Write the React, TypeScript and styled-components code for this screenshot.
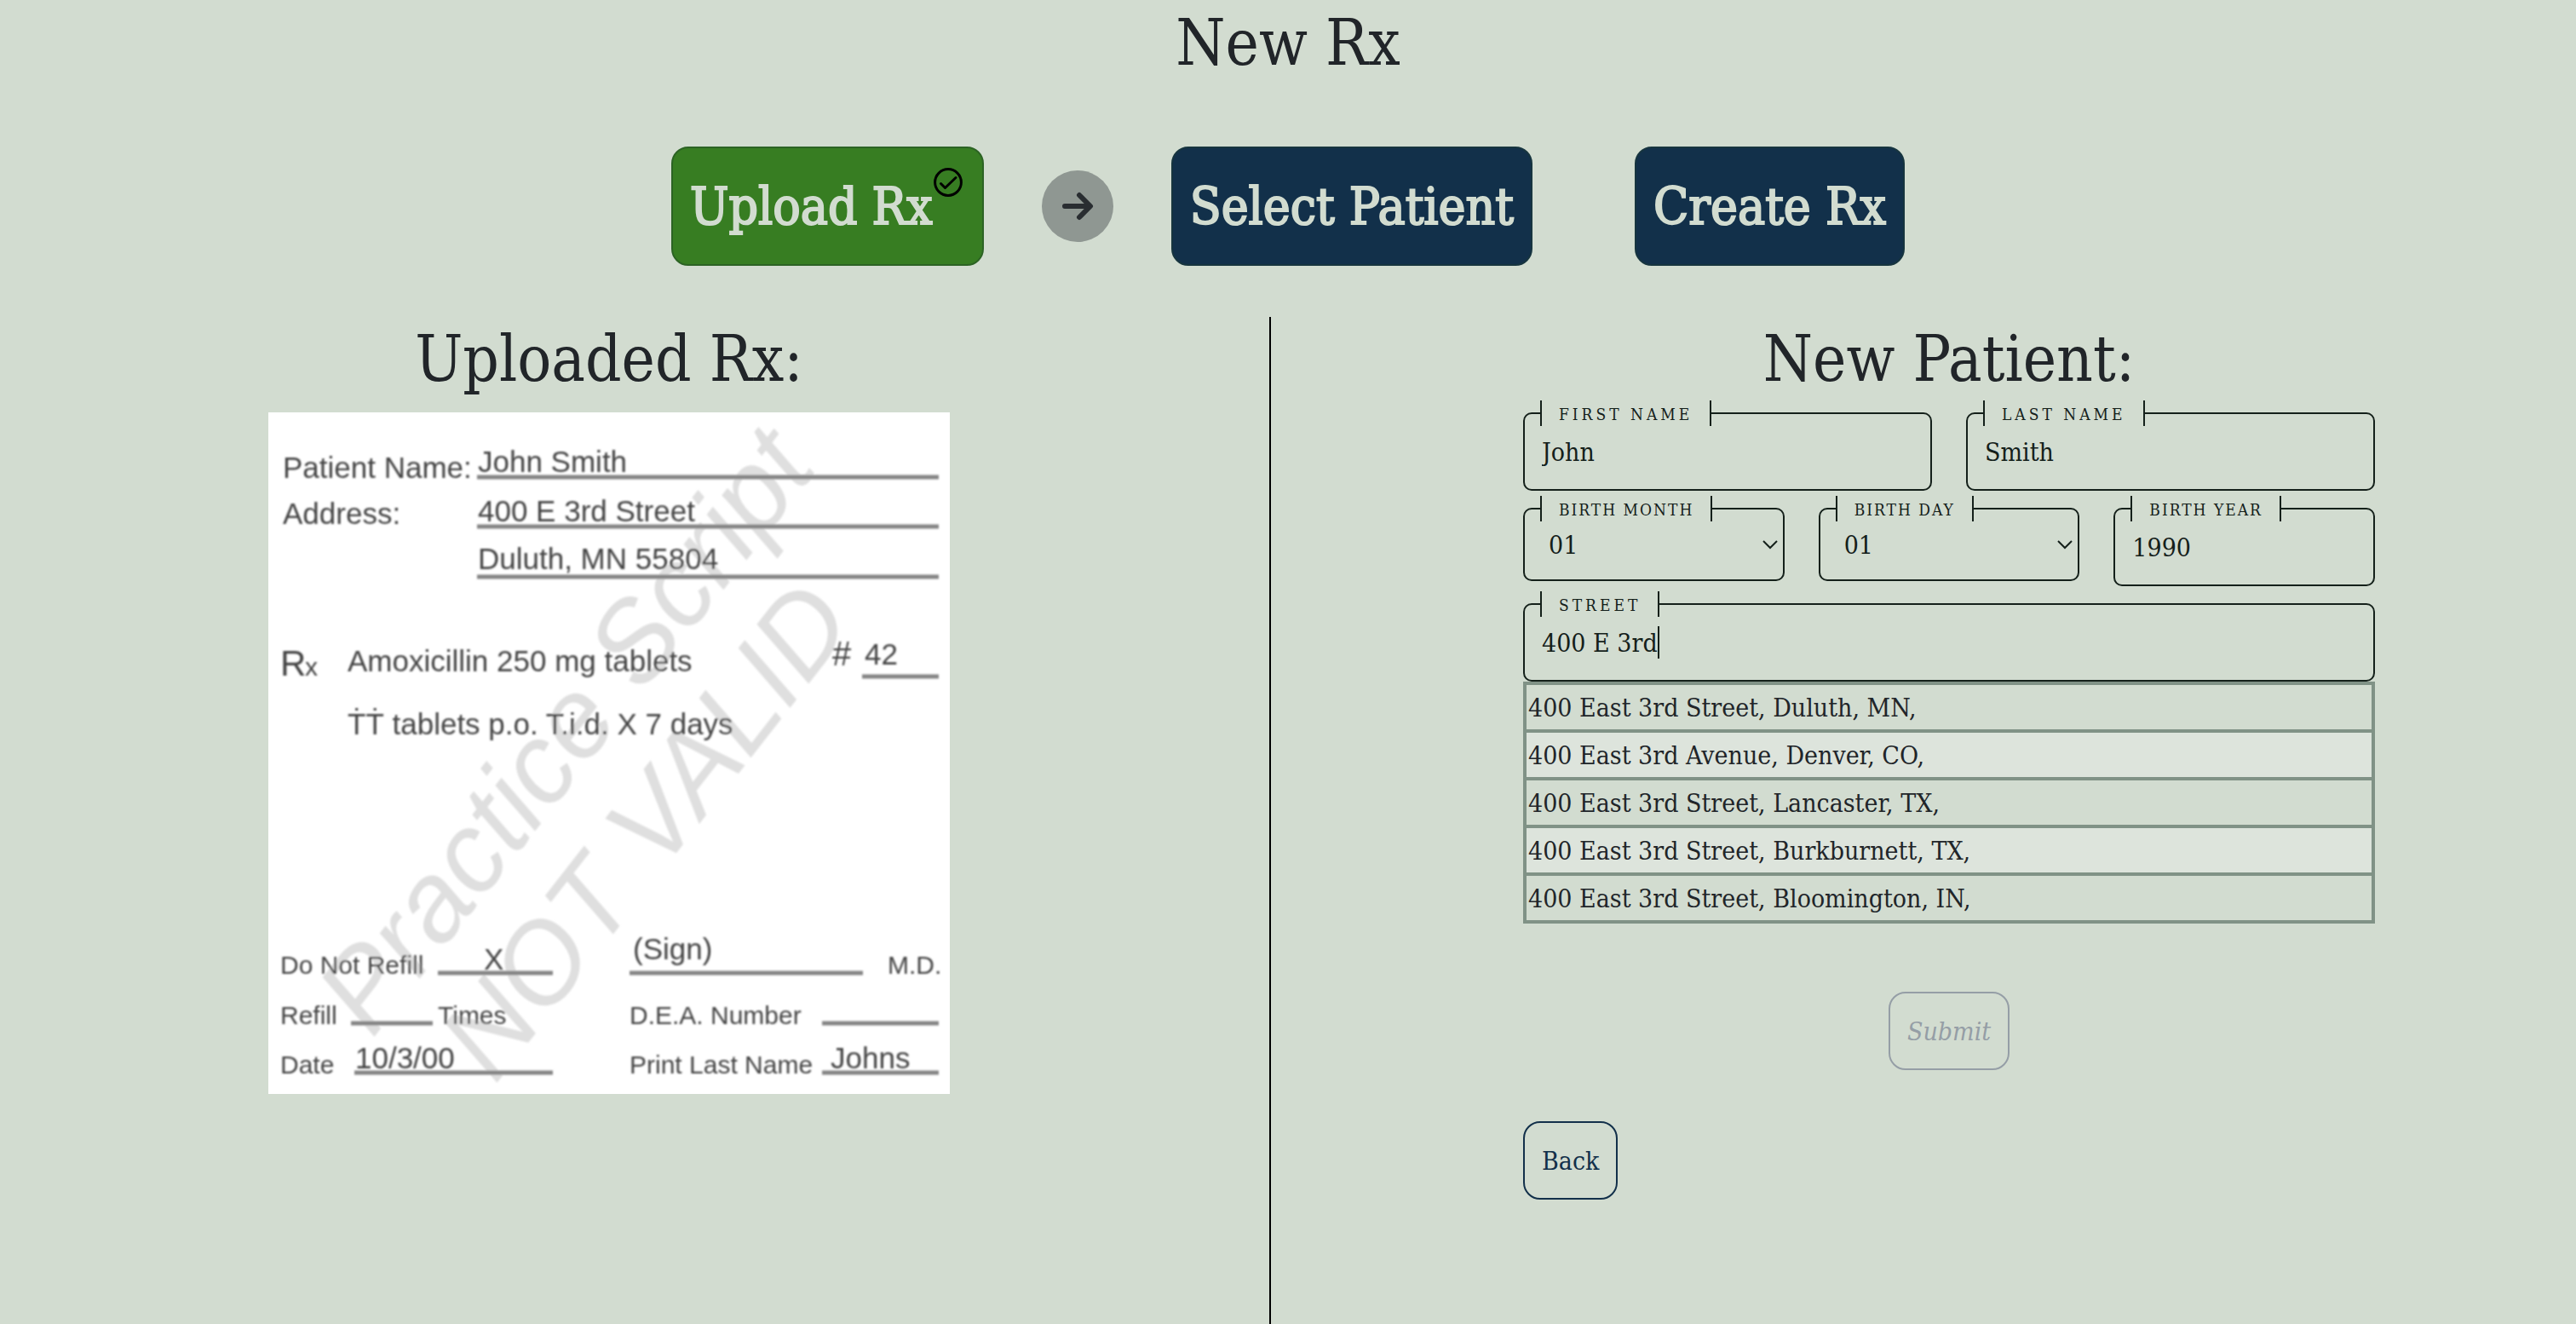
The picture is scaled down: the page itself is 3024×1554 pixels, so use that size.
import React, { useLayoutEffect, useRef, useState } from "react";
import styled, { createGlobalStyle, css } from "styled-components";

const color = {
  page: "#d2dcd0",
  stripe: "#dde4dc",
  heading: "#212529",
  ink: "#14201a",
  navy: "#12304a",
  green: "#377d22",
  sage: "#809286",
};

const slab = '"DejaVu Serif Condensed", "DejaVu Serif", serif';

const GlobalStyle = createGlobalStyle`
  *, *::before, *::after { box-sizing: border-box; }
  body {
    margin: 0;
    background: ${color.page};
    color: ${color.heading};
    font-family: ${slab};
    font-size: 30px;
  }
  button, input, select { font: inherit; color: inherit; }
`;

const Page = styled.main`
  display: flex;
  flex-direction: column;
  min-height: 100vh;
`;

const Title = styled.h1`
  margin: 0;
  font-size: 74px;
  font-weight: 400;
  line-height: 100px;
  text-align: center;
`;

const Steps = styled.nav`
  display: flex;
  justify-content: center;
  align-items: center;
  margin: 72px 0 60px;
`;

const StepButton = styled.button<{ $done?: boolean }>`
  display: flex;
  align-items: center;
  height: 140px;
  padding: 0 20px;
  border: 2px solid ${(p) => (p.$done ? "#2c6324" : "#17353f")};
  border-radius: 20px;
  background: ${(p) => (p.$done ? color.green : color.navy)};
  color: ${color.page};
  font-size: 60px;
  -webkit-text-stroke: 2px ${color.page};
  cursor: pointer;

  svg {
    align-self: flex-start;
    width: 36px;
    height: 36px;
    margin: 22px 2px 0 0;
  }
`;

const NextButton = styled.button`
  display: grid;
  place-items: center;
  width: 84px;
  height: 84px;
  margin: 0 68px;
  padding: 0;
  border: 0;
  border-radius: 50%;
  background: #8f9792;
  color: #292d31;
`;

const StepGap = styled.span`
  width: 120px;
`;

const Columns = styled.div`
  flex: 1;
  display: grid;
  grid-template-columns: 1430fr 2px 1472fr;
  column-gap: 60px;
`;

const Divider = styled.div`
  background: #000;
`;

const Column = styled.section`
  display: flex;
  flex-direction: column;
  align-items: center;
  min-width: 0;
`;

const SectionTitle = styled.h2`
  margin: 0;
  font-size: 74px;
  font-weight: 400;
  line-height: 98px;
`;

const Scan = styled.svg`
  display: block;
  width: 100%;
  max-width: 800px;
  margin-top: 14px;
  background: #fff;
`;

const Form = styled.form`
  display: flex;
  flex-direction: column;
  width: 100%;
  max-width: 1000px;
`;

const Row = styled.div<{ $columns: number }>`
  display: grid;
  grid-template-columns: repeat(${(p) => p.$columns}, 1fr);
  align-items: start;
  column-gap: 40px;

  & + & {
    margin-top: 6px;
  }
`;

const Frame = styled.fieldset`
  min-width: 0;
  margin: 0;
  padding: 0;
  border: 2px solid ${color.ink};
  border-radius: 10px;
  color: ${color.ink};
`;

const Legend = styled.legend<{ $wide?: boolean }>`
  height: 30px;
  margin-left: 18px;
  padding: 0 20px;
  border: solid ${color.ink};
  border-width: 0 2px;
  font-size: 19px;
  line-height: 32px;
  letter-spacing: ${(p) => (p.$wide ? 4 : 2)}px;
  text-transform: uppercase;
`;

const Control = styled.div`
  position: relative;
`;

const bare = css`
  display: block;
  width: 100%;
  margin: 0 0 14px;
  border: 0;
  outline: 0;
  background: transparent;
`;

const TextInput = styled.input`
  ${bare}
  height: 60px;
  padding: 0 20px;
`;

const Select = styled.select`
  ${bare}
  height: 54px;
  padding: 0 28px;
  appearance: none;
`;

const Chevron = styled.svg`
  position: absolute;
  top: 20px;
  right: 6px;
  width: 18px;
  height: 14px;
  pointer-events: none;
`;

const Caret = styled.span`
  position: absolute;
  top: 11px;
  width: 2px;
  height: 38px;
  background: ${color.ink};
`;

const Suggestions = styled.ul`
  margin: 0;
  padding: 0;
  border: 4px solid ${color.sage};
  list-style: none;
`;

const Suggestion = styled.li`
  & + & {
    border-top: 4px solid ${color.sage};
  }

  &:nth-child(even) {
    background: ${color.stripe};
  }
`;

const SuggestionButton = styled.button`
  display: block;
  width: 100%;
  height: 52px;
  padding: 0 2px;
  border: 0;
  background: transparent;
  text-align: left;
  white-space: nowrap;
`;

const ActionButton = styled.button`
  height: 92px;
  padding: 0 20px;
  border: 2px solid ${color.navy};
  border-radius: 20px;
  background: transparent;
  color: ${color.navy};
`;

const SubmitButton = styled(ActionButton)`
  align-self: center;
  margin-top: 80px;

  &:disabled {
    border-color: #959ea6;
    color: #959ea6;
    font-style: italic;
  }
`;

const BackButton = styled(ActionButton)`
  align-self: flex-start;
  margin-top: 60px;
`;

function TextField({
  id,
  label,
  initial,
  wide,
  active,
}: {
  id: string;
  label: string;
  initial: string;
  wide?: boolean;
  active?: boolean;
}) {
  const [value, setValue] = useState(initial);
  const input = useRef<HTMLInputElement>(null);
  const [caretX, setCaretX] = useState(0);

  useLayoutEffect(() => {
    if (!active || !input.current) return;
    const style = getComputedStyle(input.current);
    const context = document.createElement("canvas").getContext("2d");
    if (!context) return;
    context.font = `${style.fontSize} ${style.fontFamily}`;
    setCaretX(parseInt(style.paddingLeft, 10) + Math.ceil(context.measureText(value).width));
  }, [active, value]);

  return (
    <Frame>
      <Legend $wide={wide}>
        <label htmlFor={id}>{label}</label>
      </Legend>
      <Control>
        <TextInput
          id={id}
          ref={input}
          value={value}
          autoComplete="off"
          onChange={(event) => setValue(event.target.value)}
        />
        {active && <Caret style={{ left: caretX }} />}
      </Control>
    </Frame>
  );
}

function SelectField({ id, label, count }: { id: string; label: string; count: number }) {
  const options = Array.from({ length: count }, (_, i) => String(i + 1).padStart(2, "0"));
  return (
    <Frame>
      <Legend>
        <label htmlFor={id}>{label}</label>
      </Legend>
      <Control>
        <Select id={id} defaultValue="01">
          {options.map((option) => (
            <option key={option}>{option}</option>
          ))}
        </Select>
        <Chevron viewBox="0 0 18 14" fill="none" stroke="currentColor" strokeWidth="2" aria-hidden="true">
          <path d="M1 3l8 8 8-8" />
        </Chevron>
      </Control>
    </Frame>
  );
}

type Entry = [text: string, x: number, y: number, size: number];

const printed: Entry[] = [
  ["Patient Name:", 17, 77, 35],
  ["John Smith", 246, 70, 35],
  ["Address:", 17, 131, 35],
  ["400 E 3rd Street", 246, 128, 35],
  ["Duluth, MN 55804", 246, 184, 35],
  ["R", 14, 309, 42],
  ["x", 43, 309, 30],
  ["Amoxicillin 250 mg tablets", 93, 304, 35],
  ["#", 662, 297, 40],
  ["42", 700, 296, 35],
  ["ṪṪ tablets p.o. T.i.d. X 7 days", 93, 378, 35],
  ["Do Not Refill", 14, 659, 30],
  ["X", 253, 654, 35],
  ["(Sign)", 428, 642, 35],
  ["M.D.", 727, 659, 30],
  ["Refill", 14, 718, 30],
  ["Times", 199, 718, 30],
  ["D.E.A. Number", 424, 718, 30],
  ["Date", 14, 776, 30],
  ["10/3/00", 102, 770, 35],
  ["Print Last Name", 424, 776, 30],
  ["Johns", 660, 770, 35],
];

const rules: [x1: number, x2: number, y: number][] = [
  [245, 787, 76],
  [245, 787, 134],
  [245, 787, 193],
  [697, 787, 310],
  [199, 334, 658],
  [424, 698, 658],
  [97, 193, 717],
  [650, 787, 717],
  [101, 334, 775],
  [650, 787, 775],
];

function PrescriptionScan() {
  return (
    <Scan viewBox="0 0 800 800" role="img" aria-label="Uploaded prescription">
      <defs>
        <filter id="scan-soften">
          <feGaussianBlur stdDeviation="0.8" />
        </filter>
      </defs>
      <g filter="url(#scan-soften)" fontFamily='"Liberation Sans", sans-serif'>
        <g fill="#dfdfdf" fontStyle="italic" fontSize="132">
          <text transform="translate(122 736) rotate(-52)">Practice Script</text>
          <text transform="translate(266 790) rotate(-52)">NOT VALID</text>
        </g>
        <g stroke="#858585" strokeWidth="5">
          {rules.map(([x1, x2, y]) => (
            <path key={`${x1}-${y}`} d={`M${x1} ${y}H${x2}`} />
          ))}
        </g>
        <g fill="#444">
          {printed.map(([text, x, y, size]) => (
            <text key={text} x={x} y={y} fontSize={size}>
              {text}
            </text>
          ))}
        </g>
      </g>
    </Scan>
  );
}

const addresses = [
  "400 East 3rd Street, Duluth, MN,",
  "400 East 3rd Avenue, Denver, CO,",
  "400 East 3rd Street, Lancaster, TX,",
  "400 East 3rd Street, Burkburnett, TX,",
  "400 East 3rd Street, Bloomington, IN,",
];

export default function App() {
  return (
    <>
      <GlobalStyle />
      <Page>
        <Title>New Rx</Title>
        <Steps aria-label="Progress">
          <StepButton type="button" $done>
            Upload Rx
            <svg viewBox="0 0 36 36" fill="none" stroke="#000" strokeWidth="3" strokeLinecap="round" strokeLinejoin="round" aria-hidden="true">
              <circle cx="18" cy="18" r="15.4" />
              <path d="M9.5 19.5l5 5L27 12.5" />
            </svg>
          </StepButton>
          <NextButton type="button" aria-label="Next step">
            <svg width="40" height="36" viewBox="0 0 40 36" fill="none" stroke="currentColor" strokeWidth="6" strokeLinecap="round" strokeLinejoin="round" aria-hidden="true">
              <path d="M5 18h29M22 5l13 13-13 13" />
            </svg>
          </NextButton>
          <StepButton type="button">Select Patient</StepButton>
          <StepGap />
          <StepButton type="button">Create Rx</StepButton>
        </Steps>
        <Columns>
          <Column>
            <SectionTitle>Uploaded Rx:</SectionTitle>
            <PrescriptionScan />
          </Column>
          <Divider />
          <Column>
            <SectionTitle>New Patient:</SectionTitle>
            <Form onSubmit={(event) => event.preventDefault()}>
              <Row $columns={2}>
                <TextField id="first-name" label="First Name" initial="John" wide />
                <TextField id="last-name" label="Last Name" initial="Smith" wide />
              </Row>
              <Row $columns={3}>
                <SelectField id="birth-month" label="Birth Month" count={12} />
                <SelectField id="birth-day" label="Birth Day" count={31} />
                <TextField id="birth-year" label="Birth Year" initial="1990" />
              </Row>
              <Row $columns={1}>
                <TextField id="street" label="Street" initial="400 E 3rd" wide active />
              </Row>
              <Suggestions>
                {addresses.map((address) => (
                  <Suggestion key={address}>
                    <SuggestionButton type="button">{address}</SuggestionButton>
                  </Suggestion>
                ))}
              </Suggestions>
              <SubmitButton type="submit" disabled>
                Submit
              </SubmitButton>
              <BackButton type="button">Back</BackButton>
            </Form>
          </Column>
        </Columns>
      </Page>
    </>
  );
}
